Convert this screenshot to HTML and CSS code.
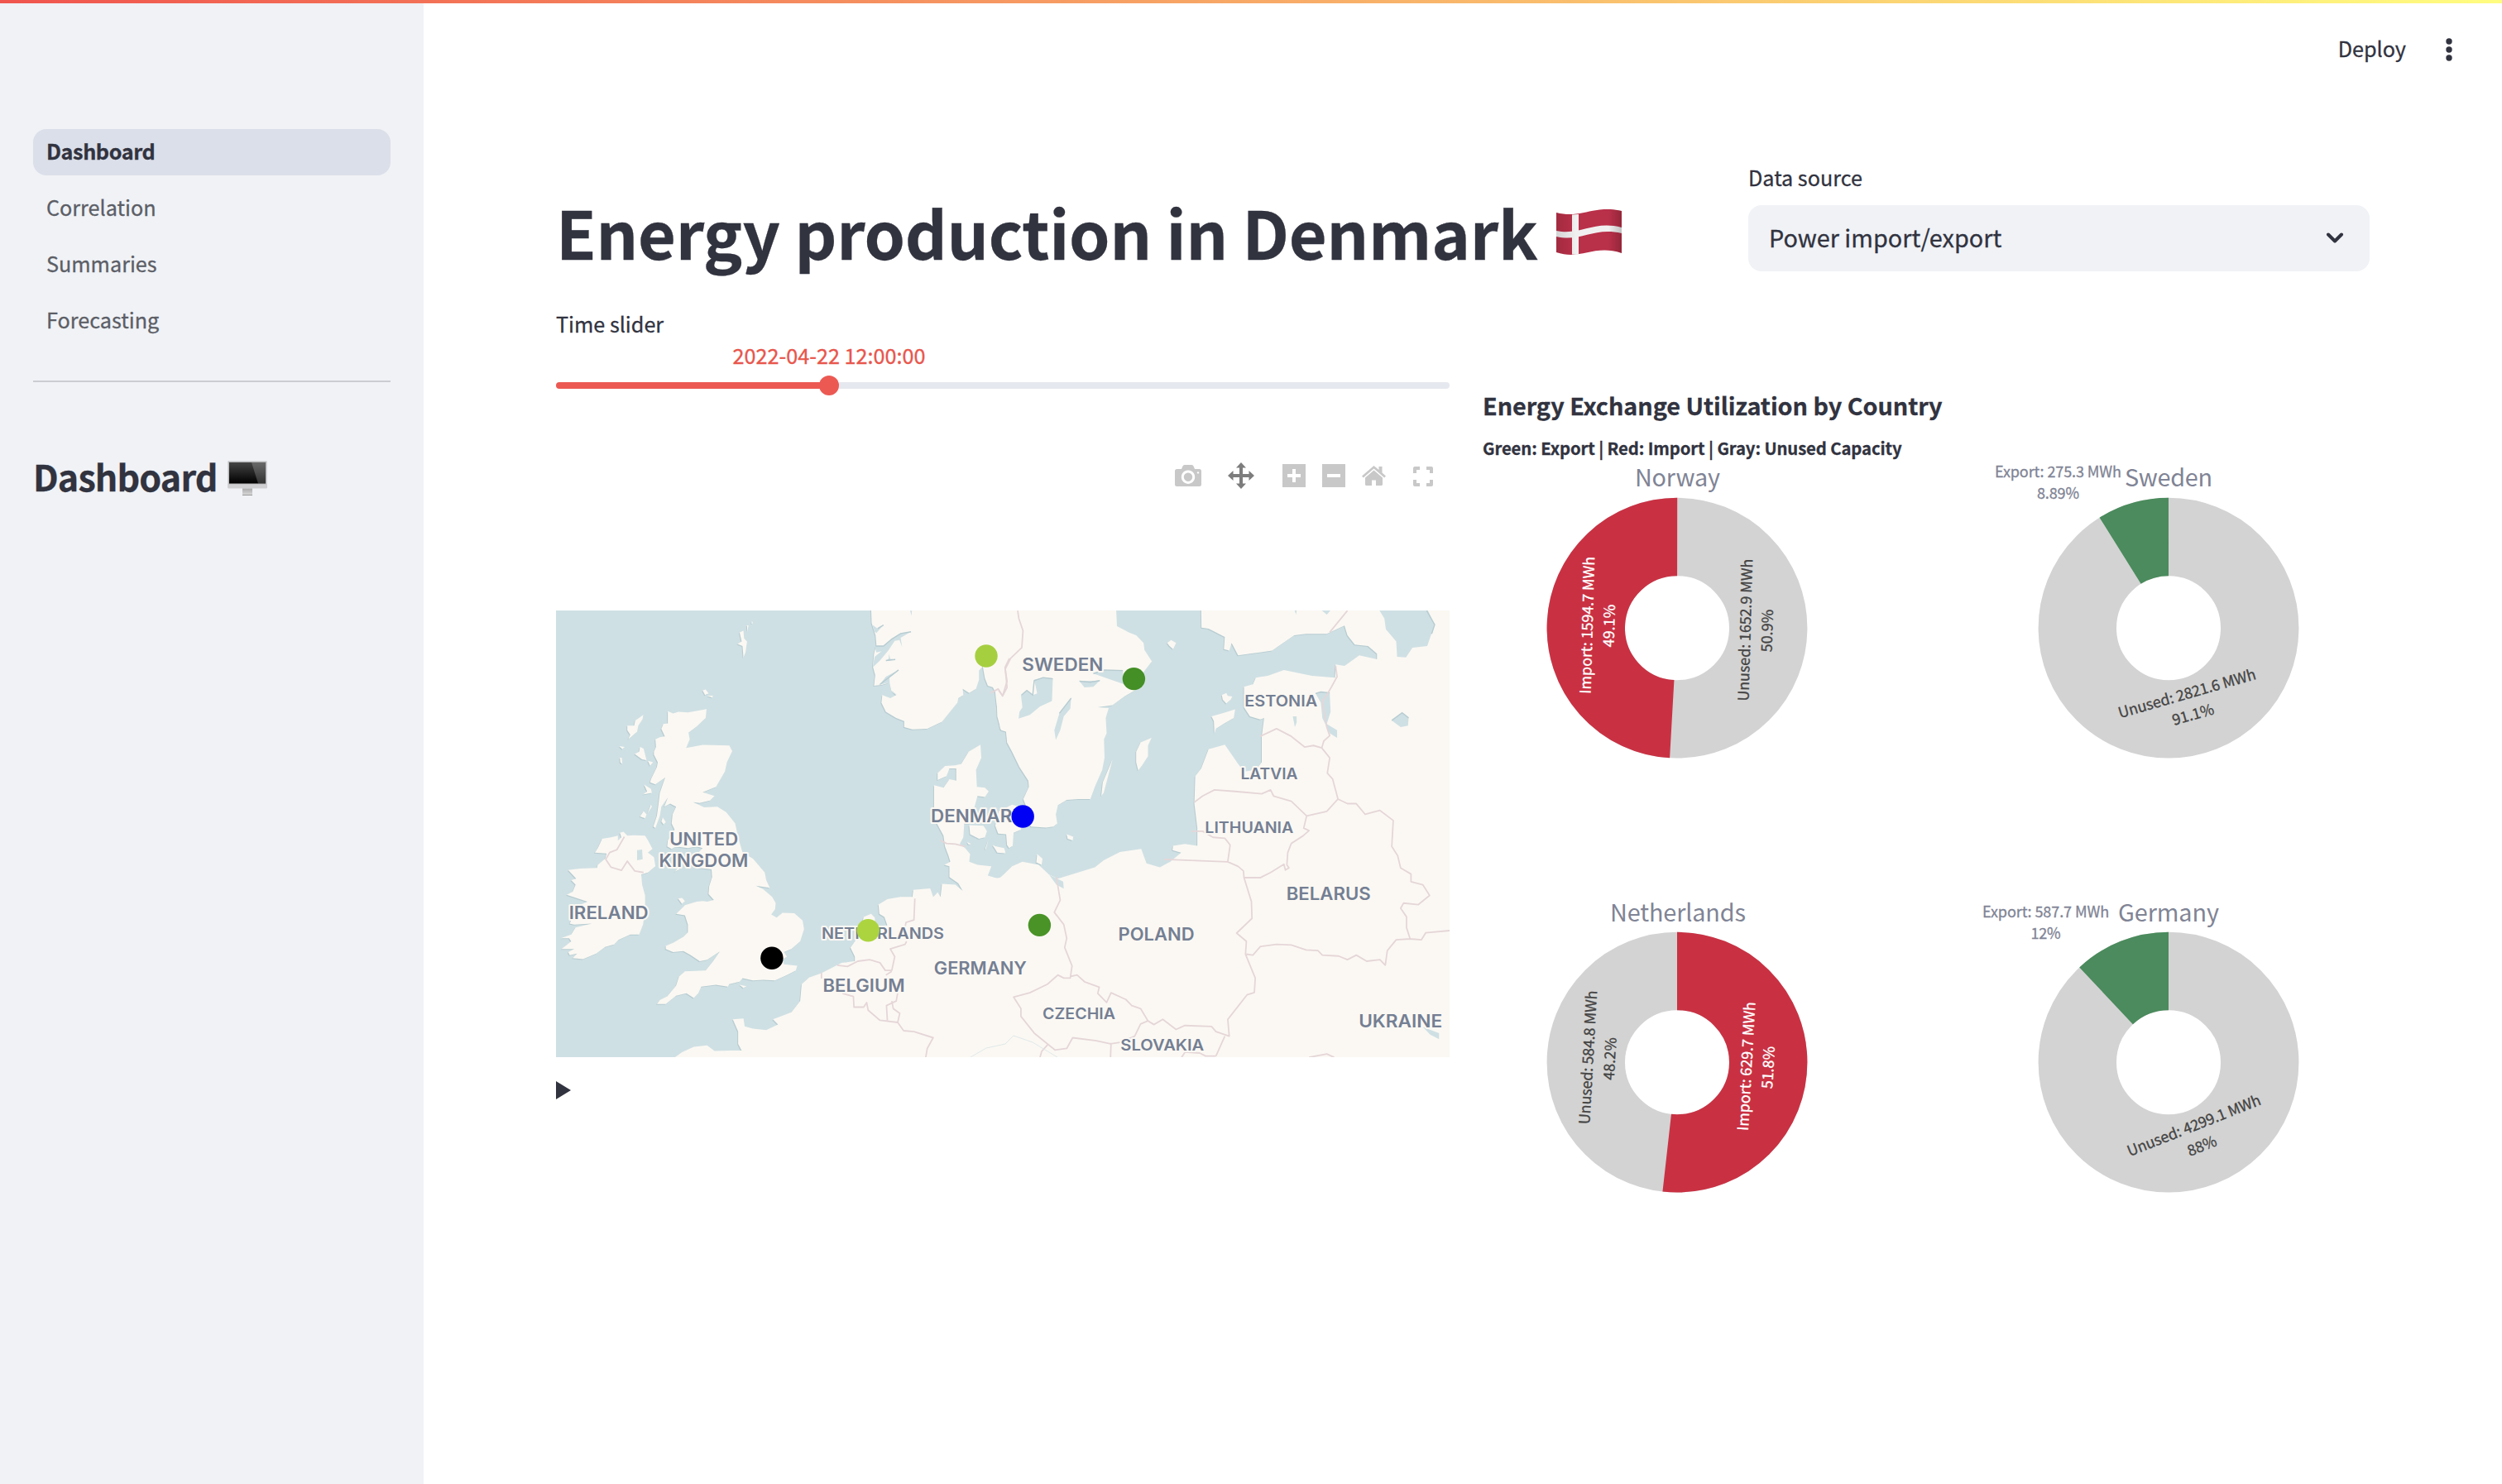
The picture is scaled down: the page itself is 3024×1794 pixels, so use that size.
FILE: index.html
```html
<!DOCTYPE html>
<html lang="en">
<head>
<meta charset="utf-8">
<title>Dashboard</title>
<link rel="stylesheet" href="styles.css">
</head>
<body>
<div class="decoration"></div>
<div class="app">
  <aside class="sidebar">
    <nav class="nav">
      <a class="nav-item active">Dashboard</a>
      <a class="nav-item">Correlation</a>
      <a class="nav-item">Summaries</a>
      <a class="nav-item">Forecasting</a>
    </nav>
    <hr class="divider">
    <h2 class="side-title"><span>Dashboard</span>
      <svg class="monitor" width="48" height="44" viewBox="0 0 48 44">
        <defs>
          <linearGradient id="scr" x1="0" y1="0" x2="0" y2="1"><stop offset="0" stop-color="#444"/><stop offset="1" stop-color="#000"/></linearGradient>
          <linearGradient id="std" x1="0" y1="0" x2="0" y2="1"><stop offset="0" stop-color="#aaa"/><stop offset="1" stop-color="#ddd"/></linearGradient>
        </defs>
        <path d="M.5.5h47v29h-47z" fill="#b9b9bb"/>
        <path d="M2 2h44v25.500H2z" fill="url(#scr)"/>
        <path d="M29 2h17v25.500H37z" fill="#fff" opacity=".2"/>
        <path d="M0 28.500h48v3.500q0 1.500-1.500 1.500h-45Q0 33.500 0 32z" fill="#cfcfd1"/>
        <path d="M18 33.500h12V42H18z" fill="url(#std)"/>
        <path d="M18 41h12v1H18z" fill="#999"/>
      </svg>
    </h2>
  </aside>
  <main class="main">
    <header class="toolbar">
      <span class="deploy">Deploy</span>
      <svg width="8" height="28" viewBox="0 0 8 28" fill="#31333f"><circle cx="4" cy="4" r="3.700"/><circle cx="4" cy="14" r="3.700"/><circle cx="4" cy="24" r="3.700"/></svg>
    </header>
    <section class="top-row">
      <h1 class="title"><span>Energy production in Denmark</span>
        <svg class="flag" width="79" height="56" viewBox="0 0 79 56">
          <defs><linearGradient id="wave" x1="0" x2="1"><stop offset="0" stop-color="#000" stop-opacity=".12"/><stop offset=".3" stop-color="#000" stop-opacity="0"/><stop offset=".8" stop-color="#000" stop-opacity="0"/><stop offset="1" stop-color="#000" stop-opacity=".2"/></linearGradient></defs>
          <path d="M0 4C30 12 45-6 79 2V53C45 42 30 62 0 52Z" fill="#b93049"/>
          <path d="M0 26C30 32 45 13 79 22V29C45 21 30 40 0 33Z" fill="#f1f0f0"/>
          <path d="M19 6.500l8-.500V55l-8-.500Z" fill="#f1f0f0"/>
          <path d="M0 4C30 12 45-6 79 2V53C45 42 30 62 0 52Z" fill="url(#wave)"/>
        </svg>
      </h1>
      <div class="source">
        <label class="label">Data source</label>
        <div class="select"><span>Power import/export</span>
          <svg width="22" height="14" viewBox="0 0 22 14"><path d="M3 2.500l8 8 8-8" fill="none" stroke="#31333f" stroke-width="4" stroke-linecap="round" stroke-linejoin="round"/></svg>
        </div>
      </div>
    </section>
    <section class="columns">
      <div class="left">
        <div class="label">Time slider</div>
        <div class="slider-value">2022-04-22 12:00:00</div>
        <div class="track"><div class="thumb"></div></div>
        <div class="modebar">
          <svg class="camera" width="32" height="26" viewBox="0 0 32 26"><path fill-rule="evenodd" d="M2.500 5H8l1.500-3.500Q10 0 11.500 0h9Q22 0 22.500 1.500L24 5h5.500Q32 5 32 7.500v16Q32 26 29.500 26h-27Q0 26 0 23.500v-16Q0 5 2.500 5ZM16 6.500a8.200 8.200 0 1 0 .01 0ZM16 9.500a5.200 5.200 0 1 1-.01 0ZM28 8.200a1.200 1.200 0 1 0 .01 0Z" fill="#c8c8c8"/></svg>
          <svg class="pan" width="32" height="32" viewBox="0 0 32 32"><path d="M16 0l6 6.500h-4V14h7.500v-4L32 16l-6.500 6v-4H18v7.500h4L16 32l-6-6.500h4V18H6.500v4L0 16l6.500-6v4H14V6.500h-4z" fill="#7d7d7d"/></svg>
          <svg class="plus" width="28" height="28" viewBox="0 0 28 28"><path fill-rule="evenodd" d="M0 0h28v28H0zM12 6v6H6v4h6v6h4v-6h6v-4h-6V6z" fill="#c8c8c8"/></svg>
          <svg class="minus" width="28" height="28" viewBox="0 0 28 28"><path fill-rule="evenodd" d="M0 0h28v28H0zM6 12v4h16v-4z" fill="#c8c8c8"/></svg>
          <svg class="home" width="29" height="25" viewBox="0 0 29 25"><path d="M14.500 5.500L4 14.500v8Q4 24 5.500 24H12v-6.500h5V24h6.500Q25 24 25 22.500v-8zM14.500 0L0 12.500l1.800 2L14.500 3.500l12.700 11 1.800-2-4.500-4V1h-4v4z" fill="#c8c8c8"/></svg>
          <svg class="full" width="24" height="24" viewBox="0 0 24 24"><path d="M2 8V2h6M16 2h6v6M22 16v6h-6M8 22H2v-6" fill="none" stroke="#c8c8c8" stroke-width="4" stroke-linejoin="round"/></svg>
        </div>
        <svg class="map" width="1080" height="540" viewBox="0 0 1080 540">
          <rect width="1080" height="540" fill="#cfe0e4"/>
          <g class="land">
            <g transform="translate(-12 -18) scale(.35714 .3699)">
              <!-- Great Britain -->
              <path d="M412,378L430,385 448,380 480,382 543,371 540,400 510,428 482,448 486,470 474,498 530,488 620,490 630,508 612,545 605,575 575,625 530,643 570,655 555,670 520,678 498,675 535,692 580,690 610,708 640,745 650,790 665,840 700,860 740,905 745,930 757,955 710,948 735,960 765,985 777,1005 775,1025 762,1042 780,1052 800,1037 840,1038 868,1062 873,1090 860,1130 830,1155 805,1165 815,1180 800,1190 805,1205 850,1210 845,1225 815,1240 775,1258 735,1256 700,1258 665,1250 655,1262 620,1270 615,1278 575,1272 525,1278 515,1300 500,1315 475,1300 440,1308 405,1335 375,1335 385,1322 410,1310 440,1275 450,1245 470,1228 540,1225 565,1195 588,1163 545,1190 520,1195 490,1175 465,1162 430,1165 405,1155 405,1145 430,1135 465,1115 480,1100 480,1075 470,1045 440,1040 470,1012 510,1000 530,998 545,1000 568,995 550,975 552,950 562,920 560,895 520,890 500,870 505,850 530,825 510,820 480,825 440,820 425,828 410,820 412,800 425,780 435,765 425,745 428,715 440,690 420,680 400,690 412,660 390,690 385,720 370,760 363,755 375,720 380,685 385,645 403,595 370,617 352,610 355,600 375,560 378,545 365,520 365,510 372,495 370,470 385,463 402,460 390,435 397,420 412,418Z"/>
              <!-- Scottish and Welsh islands -->
              <path d="M329,390L326,405 312,425 308,445 290,460 278,470 285,455 275,440 275,425 298,425 302,408ZM318,495L330,500 340,538 325,535 300,518 315,510ZM345,540L362,545 352,556ZM332,618L355,632 358,645 328,650 342,640ZM330,705L340,715 335,728 318,722ZM355,683L358,690 343,712ZM395,725L405,740 398,748 390,738ZM248,492L266,495 258,502ZM250,530L256,530 258,550 251,545ZM655,120L668,115 670,140 680,150 675,185 668,203 665,165 648,158 662,150ZM680,97L685,97 681,118ZM697,83L700,90 695,92ZM530,310L540,307 550,320 538,325ZM545,328L565,327 562,333ZM447,990L460,988 470,998 460,1008ZM655,1272L678,1277 668,1283ZM435,903L455,880 450,895Z"/>
              <!-- Ireland -->
              <path d="M190,795L220,790 243,785 243,800 255,790 250,775 262,772 275,785 300,783 335,785 345,800 360,828 345,840 365,855 370,885 345,905 322,912 325,945 335,980 335,1030 328,1075 315,1108 285,1108 245,1125 230,1140 200,1148 170,1170 125,1188 90,1185 105,1170 80,1175 75,1165 95,1155 52,1155 85,1130 78,1120 50,1120 85,1108 100,1085 155,1072 95,1075 80,1072 90,1050 95,1020 140,1000 70,978 90,968 100,945 85,930 102,925 75,897 115,892 172,890 175,880 200,860 205,843 165,840 175,825Z"/>
              <!-- Norway -->
              <path d="M1100,40L1102,90 1115,130 1118,160 1110,190 1106,232 1114,260 1110,295 1135,292 1160,285 1168,310 1185,325 1165,335 1138,325 1135,350 1150,380 1185,400 1212,410 1212,430 1240,437 1290,435 1340,412 1392,350 1395,335 1412,325 1410,305 1432,318 1455,305 1465,275 1465,245 1478,232 1485,270 1495,295 1520,302 1525,330 1527,395 1540,440 1557,445 1562,480 1600,480V40Z"/>
              <!-- Jutland and the continent -->
              <path d="M1470,487L1473,530 1455,570 1458,625 1485,628 1498,640 1485,658 1460,655 1450,690 1435,745 1415,745 1412,790 1400,812 1418,825 1435,845 1432,870 1460,880 1507,885 1495,915 1530,925 1568,905 1600,905V1520H420L460,1492 500,1475 545,1470 570,1488 625,1487 662,1487 650,1465 650,1425 632,1385 668,1382 672,1408 700,1415 745,1420 785,1402 768,1385 830,1362 860,1325 865,1270 890,1248 930,1235 1000,1200 1045,1195 1045,1180 1030,1150 1060,1110 1075,1050 1100,1040 1112,1052 1115,1080 1155,1078 1145,1050 1128,1040 1125,1010 1155,992 1200,985 1240,985 1243,962 1300,957 1310,985 1325,970 1335,985 1340,942 1385,945 1410,965 1395,940 1365,920 1365,885 1348,880 1368,870 1362,850 1350,820 1345,785 1320,740 1313,700 1313,620 1345,628 1365,600 1388,605 1388,565 1365,565 1355,590 1325,603 1325,580 1350,557 1385,555 1405,550 1430,510Z"/>
              <!-- Danish islands -->
              <path d="M1432,750L1480,752 1492,770 1485,790 1465,795 1435,780ZM1512,818L1550,825 1555,840 1530,838ZM1425,805L1438,812 1430,814ZM1497,798L1488,830 1486,828Z"/>
            </g>
            <g transform="translate(528 -18) scale(.35714 .3699)">
              <!-- Zealand, Lolland -->
              <path d="M8,752L20,705 65,683 105,695 95,765 70,775 67,818 55,825 48,815 45,780 18,778ZM0,815L30,830 42,842 15,840Z"/>
              <!-- Sweden -->
              <path d="M0,40H417L420,100 460,120 485,130 510,155 513,178 538,215 510,250 480,310 445,330 405,358 355,365 392,368 382,400 385,450 376,470 378,530 370,570 345,625 330,665 290,665 250,668 220,685 213,715 218,745 205,755 180,758 130,755 110,735 113,690 103,665 122,625 120,605 90,560 65,510 48,480 45,445 25,435 12,350 8,315 0,300Z"/>
              <!-- Baltic islands -->
              <path d="M537,465L525,490 525,525 505,555 492,572 485,545 485,510 500,480ZM405,535L375,645 367,655 372,610ZM250,780L272,788 270,800 253,795ZM590,155L603,145 620,155 610,175 598,165ZM740,395L775,385 820,372 815,400 780,420 755,435 750,450 748,410ZM775,325L790,318 795,328 810,330 805,340 790,353 778,340ZM150,845L168,860 165,880 147,872Z"/>
              <!-- Finland, Baltic states and the east -->
              <path d="M705,40L706,105 730,108 785,135 782,175 800,180 808,155 830,195 870,190 945,180 1020,130 1060,125 1130,125 1190,98 1200,130 1225,160 1270,165 1300,190 1300,208 1240,195 1190,230 1160,225 1158,268 1080,262 985,243 930,262 890,268 880,290 850,298 850,365 870,395 905,405 918,400 910,460 910,545 890,570 850,575 830,550 785,487 730,502 705,565 685,590 682,680 692,760 692,818 650,812 610,818 608,832 637,840 600,870 565,888 520,875 502,828 430,838 375,865 345,888 220,925 190,912 155,880 100,870 65,885 25,922 0,925V1520H1556V40Z"/>
            </g>
          </g>
          <g class="water">
            <g transform="translate(-12 -18) scale(.35714 .3699)">
              <path d="M308,832L325,830 327,862 308,865ZM1104,95L1122,108 1142,96 1118,122 1112,118ZM1112,165L1142,165 1170,142 1200,124 1235,118 1200,138 1205,168 1196,145 1180,148 1158,180 1130,212 1105,235 1112,200 1135,182 1118,186ZM1150,214L1160,205 1160,190 1165,207 1182,209ZM1108,298L1130,290 1150,265 1193,243 1162,268 1163,285 1168,310 1188,325 1160,312 1155,285 1128,292ZM995,1190L1030,1180 1042,1190 1015,1199ZM1008,1168L1038,1174 1040,1180ZM1232,49L1238,49 1237,66Z"/>
            </g>
            <g transform="translate(528 -18) scale(.35714 .3699)">
              <path d="M140,275L170,268 203,272 200,345 160,362 125,390 87,402 90,380 100,365 95,325 115,310 135,325 150,320ZM265,335L262,370 240,395 228,440 213,472 208,440 225,385ZM340,255L378,243 440,245 445,290 400,275ZM293,280L362,278 340,298 310,300ZM190,912L238,935 240,958 215,945ZM1303,40H1468L1495,95 1470,165 1420,170 1398,202 1368,200 1365,150 1330,110 1325,75ZM1092,320L1110,315 1140,318 1143,380 1130,420 1165,440 1165,465 1140,450 1115,400 1110,350ZM1015,395L1028,395 1028,415 1022,430ZM1350,408L1385,383 1407,400 1405,425 1380,430ZM1455,1410L1510,1430 1510,1450 1480,1435ZM1110,46H1145L1130,62ZM1018,40L1026,62 1030,40Z"/>
            </g>
          </g>
          <g fill="none" stroke="#b7ccd1" stroke-width="4">
            <g transform="translate(528 -18) scale(.35714 .3699)"><path d="M340,255L378,243 440,245M293,280L330,283 362,278M97,325L115,310 135,325 140,278 170,268 203,272M225,385L265,335M1092,320L1110,315 1140,318M1350,408L1385,383 1407,400M1468,49L1495,95 1485,125"/></g>
            <g transform="translate(-12 -18) scale(.35714 .3699)"><path d="M1122,108L1142,96M1115,165H1142L1170,142 1200,124 1235,118M1130,290L1193,243M1150,212L1182,209"/></g>
          </g>
          <g class="borders">
            <g transform="translate(-12 -18) scale(.35714 .3699)">
              <path d="M265,788L240,830 215,840 202,862 220,888 255,898 275,868 300,900 330,905M1568,205L1553,235 1560,280 1545,328 1530,305 1505,318M1335,800L1355,810 1385,812 1418,820M1248,990L1245,1060 1218,1068 1212,1100M1220,1130L1215,1140 1165,1155 1180,1180 1170,1225 1148,1225 1130,1200 1095,1190 1055,1195 1020,1212 985,1208M932,1232V1252M1150,1240L1170,1228M1003,1300L1040,1310 1042,1345 1075,1345 1085,1330 1090,1355 1130,1388 1190,1395 1210,1422 1245,1425 1310,1445 1290,1480 1283,1520M1190,1298L1185,1325 1152,1340 1155,1388M1170,1325L1175,1350 1197,1365 1190,1395"/>
            </g>
            <g transform="translate(528 -18) scale(.35714 .3699)">
              <path d="M84,49L88,75 102,115 98,170 60,205 42,240 48,300 33,328 20,310M1200,49L1140,120M1160,230L1165,265 1145,300 1130,325 1115,345 1130,430 1140,458 1120,475 1113,498 1140,530 1132,580 1150,600 1168,665 1130,705 1062,720 1010,672 950,655 940,635 910,648 820,640 750,635 710,655 682,675M905,460L960,435 1010,460 1055,495 1085,490 1113,498M1168,665L1200,680 1230,680 1260,715 1310,702 1355,735 1350,820 1370,850 1380,890 1415,910 1415,935 1455,945 1478,980 1440,1010 1390,1005 1380,1022 1400,1050 1400,1085 1412,1122 1450,1125 1465,1102 1546,1095M1062,720L1052,760 1070,768 1050,785 1010,810 998,840 995,880 1002,890 990,897 985,878 940,905 905,922 850,922M672,770L710,770 745,790 785,793 803,815 795,870 580,862M795,870L830,885 848,900 850,922 875,1000 877,1055 825,1103 858,1130 855,1172 888,1250 885,1297 860,1305 795,1385 800,1440 755,1425 740,1408 650,1405 620,1418 575,1385 545,1402 525,1390 500,1400 480,1440 430,1460M858,1172L880,1175 905,1147 960,1140 1010,1142 1060,1158 1100,1160 1115,1175 1170,1178 1200,1190 1230,1175 1265,1195 1310,1190 1328,1208 1335,1160 1365,1125 1412,1122M215,920L228,995 208,1035 240,1075 250,1120 243,1150 268,1210 262,1250 240,1250 220,1240 185,1270 125,1298 70,1312 95,1350 95,1375 140,1430 185,1465 210,1485 250,1480 270,1445 350,1455 398,1465 430,1460M262,1245L285,1240 310,1262 360,1280 355,1300 385,1330 400,1298 450,1320 470,1340 500,1350 525,1390M400,1462L398,1515M158,1515L165,1490 185,1468M785,1440L755,1505M635,1515L650,1492 700,1495 720,1505 755,1505M1070,1509L1130,1498 1155,1509"/>
            </g>
          </g>
          <path d="M501 540l19-11 23-5 10-10 23 8 30 18" fill="none" stroke="#dfe9ea" stroke-width="1"/>
          <g class="countries">
            <text x="178.700" y="283.800" textLength="83" lengthAdjust="spacingAndGlyphs" font-size="21.300">UNITED</text>
            <text x="178.400" y="310" textLength="108" lengthAdjust="spacingAndGlyphs" font-size="21.300">KINGDOM</text>
            <text x="63.700" y="372.600" textLength="96" lengthAdjust="spacingAndGlyphs" font-size="21.300">IRELAND</text>
            <text x="510" y="256" textLength="114" lengthAdjust="spacingAndGlyphs" font-size="21.300">DENMARK</text>
            <text x="395" y="397" textLength="148" lengthAdjust="spacingAndGlyphs" font-size="19">NETHERLANDS</text>
            <text x="372" y="460.600" textLength="99" lengthAdjust="spacingAndGlyphs" font-size="21.300">BELGIUM</text>
            <text x="512.800" y="440.300" textLength="112" lengthAdjust="spacingAndGlyphs" font-size="21.300">GERMANY</text>
            <text x="612.300" y="72.600" textLength="98" lengthAdjust="spacingAndGlyphs" font-size="21.300">SWEDEN</text>
            <text x="876.200" y="116.300" textLength="88" lengthAdjust="spacingAndGlyphs" font-size="19">ESTONIA</text>
            <text x="862" y="203.600" textLength="69" lengthAdjust="spacingAndGlyphs" font-size="19">LATVIA</text>
            <text x="837.800" y="269" textLength="107" lengthAdjust="spacingAndGlyphs" font-size="19">LITHUANIA</text>
            <text x="933.700" y="350" textLength="102" lengthAdjust="spacingAndGlyphs" font-size="21.300">BELARUS</text>
            <text x="725.500" y="398.900" textLength="92" lengthAdjust="spacingAndGlyphs" font-size="21.300">POLAND</text>
            <text x="632" y="494" textLength="88" lengthAdjust="spacingAndGlyphs" font-size="19">CZECHIA</text>
            <text x="732.800" y="531.700" textLength="101" lengthAdjust="spacingAndGlyphs" font-size="19">SLOVAKIA</text>
            <text x="1020.700" y="504" textLength="101" lengthAdjust="spacingAndGlyphs" font-size="21.300">UKRAINE</text>
          </g>
          <circle cx="520" cy="55" r="13.700" fill="#a6cf40"/>
          <circle cx="377.300" cy="386.700" r="13.700" fill="#acd43f"/>
          <circle cx="260.900" cy="420.300" r="13.700" fill="#000"/>
          <circle cx="698.400" cy="82.600" r="13.700" fill="#448f26"/>
          <circle cx="584.400" cy="380.400" r="13.700" fill="#4a9327"/>
          <circle cx="564.200" cy="249" r="13.700" fill="#0000f5"/>
        </svg>
        <svg class="play" width="18" height="22" viewBox="0 0 18 22"><path d="M0 0l18 11L0 22z" fill="#31333f"/></svg>
      </div>
      <div class="right">
        <h3 class="chart-title">Energy Exchange Utilization by Country</h3>
        <div class="chart-sub">Green: Export | Red: Import | Gray: Unused Capacity</div>
        <svg class="pies" width="1072" height="930" viewBox="1792 530 1072 930">
          <g fill="none" stroke="#d3d3d3" stroke-width="94.400">
            <circle cx="2027" cy="759.200" r="110.200"/>
            <circle cx="2621" cy="759.200" r="110.200"/>
            <circle cx="2027" cy="1284.200" r="110.200"/>
            <circle cx="2621" cy="1284.200" r="110.200"/>
            <circle class="import" pathLength="100" stroke-dasharray="49.1 50.9" transform="rotate(93.240 2027 759.200)" cx="2027" cy="759.200" r="110.200"/>
            <circle class="export" pathLength="100" stroke-dasharray="8.89 91.11" transform="rotate(-122 2621 759.200)" cx="2621" cy="759.200" r="110.200"/>
            <circle class="import" pathLength="100" stroke-dasharray="51.8 48.2" transform="rotate(-90 2027 1284.200)" cx="2027" cy="1284.200" r="110.200"/>
            <circle class="export" pathLength="100" stroke-dasharray="12 88" transform="rotate(-133.200 2621 1284.200)" cx="2621" cy="1284.200" r="110.200"/>
          </g>
          <g class="names">
            <text x="2027.500" y="587.700" textLength="103">Norway</text>
            <text x="2621" y="588" textLength="106">Sweden</text>
            <text x="2028" y="1114" textLength="164">Netherlands</text>
            <text x="2621" y="1114" textLength="122">Germany</text>
          </g>
          <g class="values outer">
            <text x="2487.500" y="577" textLength="153">Export: 275.3 MWh</text>
            <text x="2487.500" y="603" textLength="51">8.89%</text>
            <text x="2472.600" y="1109" textLength="153">Export: 587.7 MWh</text>
            <text x="2472.600" y="1135" textLength="36">12%</text>
          </g>
          <g class="values">
            <g transform="translate(1918.300 755.800) rotate(-88.400)" class="light"><text y="6.600" textLength="166">Import: 1594.7 MWh</text><text y="33">49.1%</text></g>
            <g transform="translate(2109.200 761.700) rotate(-88.400)"><text y="6.600" textLength="172">Unused: 1652.9 MWh</text><text y="33">50.9%</text></g>
            <g transform="translate(2643.200 838.200) rotate(-16)"><text y="6.600" textLength="172">Unused: 2821.6 MWh</text><text y="33">91.1%</text></g>
            <g transform="translate(2110.600 1289) rotate(-86.800)" class="light"><text y="6.600" textLength="156">Import: 629.7 MWh</text><text y="33">51.8%</text></g>
            <g transform="translate(1919.200 1278.300) rotate(-86.800)"><text y="6.600" textLength="162">Unused: 584.8 MWh</text><text y="33">48.2%</text></g>
            <g transform="translate(2651.500 1360.500) rotate(-21.600)"><text y="6.600" textLength="172">Unused: 4299.1 MWh</text><text y="33">88%</text></g>
          </g>
        </svg>
      </div>
    </section>
  </main>
</div>
</body>
</html>
```
FILE: styles.css
```css
* { box-sizing: border-box; }
body {
  margin: 0;
  background: #fff;
  color: #31333f;
  font-family: "Noto Sans CJK SC", "Noto Sans", sans-serif;
  font-size: 25.2px;
  height: 1794px;
  overflow: hidden;
  -webkit-text-stroke: .3px currentColor;
}
svg { display: block; flex: none; }
h1, h2, h3 { margin: 0; font-weight: 700; white-space: nowrap; }
.decoration {
  position: absolute;
  inset: 0 0 auto;
  height: 4px;
  background: linear-gradient(90deg, #f0554e, #fffd80);
}
.app { display: flex; height: 100%; }
.sidebar {
  width: 512px;
  background: #f0f2f6;
  padding: 156px 40px 0;
}
.nav { display: flex; flex-direction: column; gap: 12px; }
.nav-item {
  height: 56px;
  line-height: 53px;
  padding: 0 16px;
  border-radius: 16px;
  color: #5c5e66;
}
.nav-item.active { background: #dbdfe9; font-weight: 700; color: #31333f; letter-spacing: -.4px; }
.divider { border: 0; height: 2px; background: #cbccd2; margin: 44px 0 0; }
.side-title {
  display: flex;
  gap: 12.500px;
  margin-top: 83px;
  font-size: 43px;
  line-height: 60px;
  letter-spacing: -.85px;
}
.monitor { margin-top: 12px; }
.main { flex: 1; padding: 0 160px; }
.toolbar {
  height: 193px;
  margin-right: -100px;
  display: flex;
  justify-content: flex-end;
  gap: 48px;
  padding-top: 37px;
}
.toolbar svg { margin-top: 9px; }
.deploy { line-height: 42px; }
.top-row { display: flex; justify-content: space-between; height: 177px; }
.title {
  display: flex;
  gap: 22px;
  padding-top: 34px;
  font-size: 79.2px;
  line-height: 106px;
  letter-spacing: -.27px;
}
.flag { margin-top: 26px; }
.source { width: 751px; }
.label { display: block; line-height: 42px; }
.select {
  margin-top: 13px;
  height: 80px;
  border-radius: 16px;
  background: #f0f2f6;
  display: flex;
  align-items: center;
  justify-content: space-between;
  padding: 0 31px 0 25px;
  font-size: 28.8px;
}
.select span { line-height: 78px; padding-bottom: 2px; }
.columns { display: grid; grid-template-columns: 1080px 1072px; gap: 40px; }
.slider-value {
  width: 660px;
  text-align: center;
  line-height: 42px;
  margin-top: -4px;
  color: #e8564c;
}
.track {
  height: 8px;
  margin-top: 12px;
  border-radius: 4px;
  background: linear-gradient(90deg, #ec5953 330px, #e6e8ef 330px);
  position: relative;
}
.thumb {
  position: absolute;
  left: 318px;
  top: -8px;
  width: 24px;
  height: 24px;
  border-radius: 50%;
  background: #ec5953;
}
.modebar {
  display: flex;
  align-items: center;
  height: 32px;
  margin-top: 89px;
  padding-left: 748px;
}
.pan { margin-left: 32px; }
.plus { margin-left: 34px; }
.minus, .home { margin-left: 20px; }
.full { margin: 2px 0 0 33px; }
.map { margin-top: 147px; }
.land { fill: #fbf8f3; filter: drop-shadow(-.5px 1.500px 0 #b7ccd1); }
.water { fill: #cfe0e4; }
.borders { fill: none; stroke: #e5d6d8; stroke-width: 5; stroke-linejoin: round; }
.countries {
  font-family: Inter, sans-serif;
  font-weight: 600;
  fill: #747f93;
  stroke: #fbf8f3;
  stroke-width: 4;
  stroke-linejoin: round;
  paint-order: stroke;
  text-anchor: middle;
  -webkit-text-stroke: 4px #fbf8f3;
}
.play { margin-top: 29px; }
.right { padding: 92px 0 0; }
.chart-title { font-size: 28.8px; line-height: 56px; letter-spacing: -.06px; }
.chart-sub { font-size: 20.3px; font-weight: 700; line-height: 46px; letter-spacing: -.1px; white-space: nowrap; }
.pies { margin-top: -34px; }
.pies text { text-anchor: middle; }
.import { stroke: #c93143; }
.export { stroke: #4b8b5d; }
.names { font-size: 28.800px; fill: #808495; -webkit-text-stroke: 0; }
.values { font-size: 18px; fill: #444; -webkit-text-stroke: 0; stroke: #444; stroke-width: .3px; }
.outer { fill: #808495; stroke: #808495; }
.light { fill: #fff; stroke: #fff; }
```
